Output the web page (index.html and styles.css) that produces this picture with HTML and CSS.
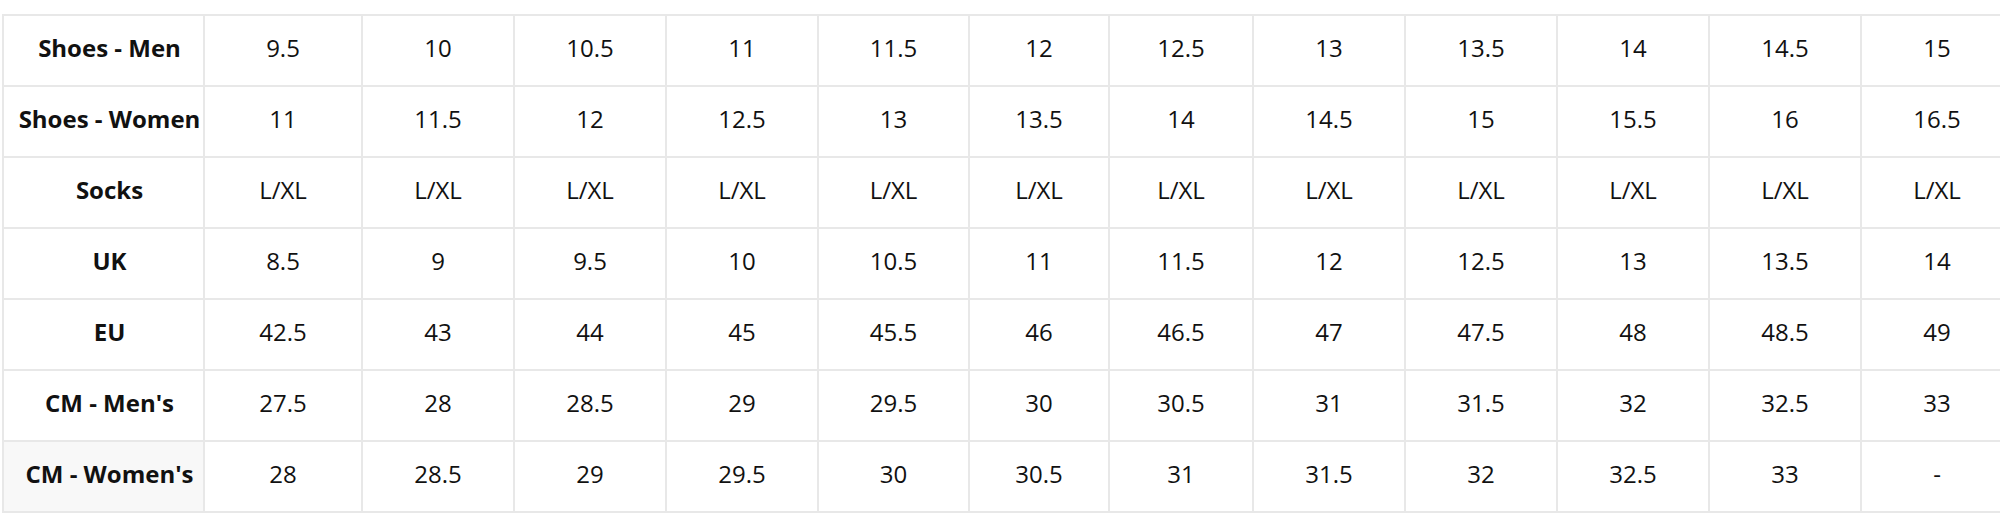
FILE: index.html
```html
<!DOCTYPE html>
<html lang="en">
<head>
<meta charset="utf-8">
<title>Size Chart</title>
<link rel="stylesheet" href="styles.css">
</head>
<body>
<table class="size-chart">
  <colgroup>
    <col class="c-head">
    <col class="c-w158">
    <col class="c-w152"><col class="c-w152"><col class="c-w152">
    <col class="c-w151">
    <col class="c-w140">
    <col class="c-w144">
    <col class="c-w152"><col class="c-w152"><col class="c-w152"><col class="c-w152"><col class="c-w152">
  </colgroup>
  <tbody>
    <tr><th>Shoes - Men</th><td>9.5</td><td>10</td><td>10.5</td><td>11</td><td>11.5</td><td>12</td><td>12.5</td><td>13</td><td>13.5</td><td>14</td><td>14.5</td><td>15</td></tr>
    <tr><th>Shoes - Women</th><td>11</td><td>11.5</td><td>12</td><td>12.5</td><td>13</td><td>13.5</td><td>14</td><td>14.5</td><td>15</td><td>15.5</td><td>16</td><td>16.5</td></tr>
    <tr><th>Socks</th><td>L/XL</td><td>L/XL</td><td>L/XL</td><td>L/XL</td><td>L/XL</td><td>L/XL</td><td>L/XL</td><td>L/XL</td><td>L/XL</td><td>L/XL</td><td>L/XL</td><td>L/XL</td></tr>
    <tr><th>UK</th><td>8.5</td><td>9</td><td>9.5</td><td>10</td><td>10.5</td><td>11</td><td>11.5</td><td>12</td><td>12.5</td><td>13</td><td>13.5</td><td>14</td></tr>
    <tr><th>EU</th><td>42.5</td><td>43</td><td>44</td><td>45</td><td>45.5</td><td>46</td><td>46.5</td><td>47</td><td>47.5</td><td>48</td><td>48.5</td><td>49</td></tr>
    <tr><th>CM - Men's</th><td>27.5</td><td>28</td><td>28.5</td><td>29</td><td>29.5</td><td>30</td><td>30.5</td><td>31</td><td>31.5</td><td>32</td><td>32.5</td><td>33</td></tr>
    <tr><th class="shaded">CM - Women's</th><td>28</td><td>28.5</td><td>29</td><td>29.5</td><td>30</td><td>30.5</td><td>31</td><td>31.5</td><td>32</td><td>32.5</td><td>33</td><td>-</td></tr>
  </tbody>
</table>
</body>
</html>
```

FILE: styles.css
```css
html, body {
  margin: 0;
  padding: 0;
  background: #ffffff;
}

body {
  width: 2000px;
  overflow: hidden;
  font-family: "Open Sans", "Liberation Sans", Arial, sans-serif;
  color: #111111;
}

.size-chart {
  border-collapse: collapse;
  table-layout: fixed;
  width: 2011px;
  margin: 14px 0 0 2px;
  font-size: 24px;
  line-height: 1.2;
}

.size-chart col.c-head { width: 201px; }
.size-chart col.c-w158 { width: 158px; }
.size-chart col.c-w152 { width: 152px; }
.size-chart col.c-w151 { width: 151px; }
.size-chart col.c-w140 { width: 140px; }
.size-chart col.c-w144 { width: 144px; }

.size-chart tr {
  height: 71px;
}

.size-chart th,
.size-chart td {
  border: 2px solid #e8e8e8;
  text-align: center;
  vertical-align: middle;
  padding: 0 0 5px 0;
  white-space: nowrap;
}

.size-chart th {
  font-weight: 700;
  padding-left: 12px;
}

.size-chart td {
  font-weight: 400;
}

.size-chart th.shaded {
  background: #f8f8f8;
}
```
